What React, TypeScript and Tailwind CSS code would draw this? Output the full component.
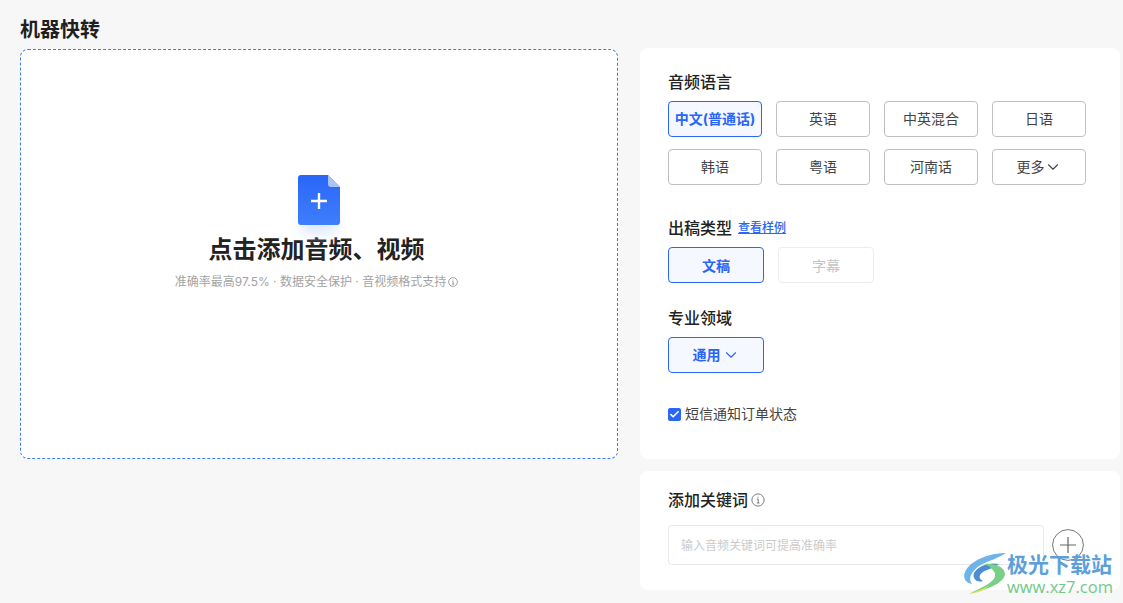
import { ChevronDown, Check } from "lucide-react";

const font = "font-['Inter','Noto_Sans_CJK_SC',sans-serif]";

const langs = ["中文(普通话)", "英语", "中英混合", "日语", "韩语", "粤语", "河南话"];

const InfoIcon = ({ className }: { className: string }) => (
  <svg viewBox="0 0 16 16" fill="none" stroke="currentColor" className={className}>
    <circle cx="8" cy="8" r="7" strokeWidth="1.1" />
    <path d="M6.8 6.9H8.2V11.4M6.6 11.4H9.8M8 4.2V5.4" strokeWidth="1.1" />
  </svg>
);

const Watermark = () => (
  <div className="absolute left-[963px] top-[552px] flex items-start">
    <svg viewBox="0 0 44 42" className="w-[44px] h-[42px]">
      <path d="M43 1C28 1 10 7 3 18C-1 25 2 31 9 32C5 27 8 20 16 14C24 9 34 7 43 1Z" fill="#6db4e8" />
      <path d="M36 12C26 10 15 14 11 21C9 27 14 31 20 29C16 27 15 23 20 20C25 17 31 16 36 12Z" fill="#4b8fd0" />
      <path d="M22 12C31 11 42 15 42 22C41 31 26 37 6 42C17 36 31 31 32 24C33 20 28 15 22 12Z" fill="#79cf86" />
      <path d="M6 42C13 39 20 37 26 34C21 39 14 41 6 42Z" fill="#e2de5c" />
    </svg>
    <div className="flex flex-col">
      <span className="text-[21px] leading-[25px] font-bold text-[#5d9fdb] whitespace-nowrap">极光下载站</span>
      <span className="text-[16.5px] leading-[20px] font-medium text-[#6fc98a] font-['Open_Sans',sans-serif] whitespace-nowrap">www.xz7.com</span>
    </div>
  </div>
);

export default function App() {
  return (
    <div className={`relative w-[1123px] h-[603px] overflow-hidden bg-[#f7f7f7] pl-5 pt-[17px] ${font}`}>
      <h1 className="text-[20px] leading-[27px] font-bold text-[#1f1f1f] mb-[5px]">机器快转</h1>
      <div className="flex gap-[22px] items-start">
        {/* upload area */}
        <div className="w-[598px] h-[410px] shrink-0 bg-white rounded-lg border border-dashed border-[#3f78f5] flex flex-col items-center pt-[125px]">
          <div className="relative w-[42px] h-[50px]">
            <div className="absolute left-[4px] right-[4px] top-[40px] h-[18px] bg-[#dbe6ff] blur-[7px]" />
            <svg viewBox="0 0 42 50" className="relative w-[42px] h-[50px]">
              <defs>
                <linearGradient id="docFill" x1="0" y1="0" x2="0" y2="1">
                  <stop offset="0" stopColor="#2a66f8" />
                  <stop offset="1" stopColor="#3f7efc" />
                </linearGradient>
              </defs>
              <path d="M3 0H30L42 12V47a3 3 0 0 1-3 3H3a3 3 0 0 1-3-3V3a3 3 0 0 1 3-3Z" fill="url(#docFill)" />
              <path d="M30 0L42 12H33a3 3 0 0 1-3-3Z" fill="#a9c3fb" />
              <path d="M21 18V34M13 26H29" stroke="#fff" strokeWidth="2.4" />
            </svg>
          </div>
          <p className="mt-[10px] mr-[5px] text-[24px] leading-[30px] font-bold text-[#222]">点击添加音频、视频</p>
          <div className="mt-[9px] mr-[5px] flex items-center gap-[2px] text-[12px] leading-[16px] text-[#a3a3a3]">
            <span>准确率最高97.5% · 数据安全保护 · 音视频格式支持</span>
            <InfoIcon className="w-[10px] h-[10px] text-[#777]" />
          </div>
        </div>

        {/* settings */}
        <div className="w-[480px] shrink-0 -mt-px flex flex-col gap-3">
          <div className="h-[411px] bg-white rounded-lg pl-7 pt-[23px]">
            <h2 className="text-[16px] leading-[22px] font-medium text-[#222] mb-[8px]">音频语言</h2>
            <div className="grid grid-cols-[repeat(4,94px)] gap-x-[14px] gap-y-3">
              {langs.map((l, i) => (
                <button
                  key={l}
                  className={
                    i === 0
                      ? "h-9 pb-[2px] rounded border border-[#2a66f6] bg-[#f5f8ff] text-[14px] font-bold text-[#2a66f6] whitespace-nowrap"
                      : "h-9 pb-[2px] rounded border border-[#c0c0c0] text-[14px] text-[#444]"
                  }
                >
                  {l}
                </button>
              ))}
              <button className="h-9 pb-[2px] rounded border border-[#c0c0c0] text-[14px] text-[#444] flex items-center justify-center">
                更多
                <ChevronDown className="w-[18px] h-[18px] ml-[-1px] mt-[2px]" strokeWidth={1.5} />
              </button>
            </div>

            <div className="mt-[32px] flex items-center gap-[6px]">
              <h2 className="text-[16px] leading-[22px] font-medium text-[#222]">出稿类型</h2>
              <a className="text-[12px] font-medium text-[#2a66f6] underline">查看样例</a>
            </div>
            <div className="mt-[8px] flex gap-[14px]">
              <button className="w-24 h-9 rounded border border-[#2a66f6] bg-[#f5f8ff] text-[14px] font-bold text-[#2a66f6]">文稿</button>
              <button className="w-24 h-9 rounded border border-[#ececec] text-[14px] text-[#c4c4c4]">字幕</button>
            </div>

            <h2 className="mt-[24px] text-[16px] leading-[22px] font-medium text-[#222]">专业领域</h2>
            <button className="mt-[8px] w-24 h-9 pb-[2px] rounded border border-[#2a66f6] bg-[#f5f8ff] text-[14px] font-bold text-[#2a66f6] flex items-center justify-center gap-[1px]">
              通用
              <ChevronDown className="w-[18px] h-[18px] mt-[2px]" strokeWidth={1.5} />
            </button>

            <label className="mt-[32px] flex items-center gap-[4px] text-[14px] leading-[18px] text-[#444]">
              <span className="w-[13px] h-[13px] rounded-[2px] bg-[#2a66f6] flex items-center justify-center">
                <Check className="w-[11px] h-[11px] text-white" strokeWidth={3.5} />
              </span>
              短信通知订单状态
            </label>
          </div>

          <div className="h-[119px] bg-white rounded-lg pl-7 pt-[18px]">
            <div className="flex items-center gap-[3px]">
              <h2 className="text-[16px] leading-[22px] font-medium text-[#222]">添加关键词</h2>
              <InfoIcon className="w-[14px] h-[14px] text-[#777]" />
            </div>
            <div className="mt-[14px] flex items-center gap-[8px]">
              <div className="w-[376px] h-10 pt-[2px] rounded border border-[#e8e8e8] flex items-center px-3 text-[12px] text-[#cbcbcb]">
                输入音频关键词可提高准确率
              </div>
              <svg viewBox="0 0 32 32" className="w-[32px] h-[32px]" fill="none" stroke="#666">
                <circle cx="16" cy="16" r="15.4" strokeWidth="0.9" />
                <path d="M16 8V24M8 16H24" strokeWidth="1.2" />
              </svg>
            </div>
          </div>
        </div>
      </div>
      <Watermark />
    </div>
  );
}
